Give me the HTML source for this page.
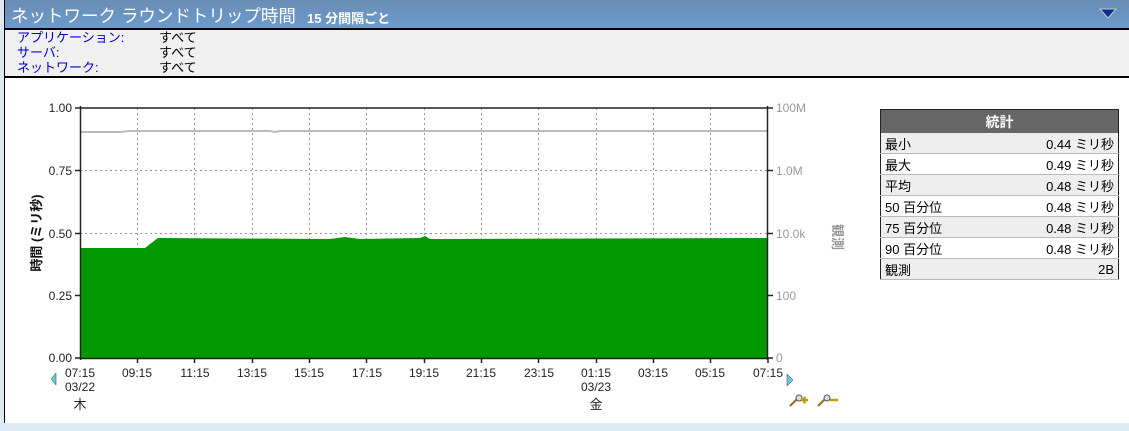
<!DOCTYPE html>
<html><head><meta charset="utf-8"><style>
body{margin:0;width:1129px;height:431px;overflow:hidden;background:#dde9f3;font-family:"Liberation Sans","Noto Sans CJK JP",sans-serif;position:relative}
#box{position:absolute;left:4px;top:0;width:1125px;height:423px;background:#fff;border-left:1px solid #000}
#hdr{position:absolute;left:0;top:0;width:1125px;height:28px;background:linear-gradient(#6a8db6,#6b9bcb);border-bottom:2px solid #000;color:#fff}
#hdr .t{position:absolute;left:6px;top:3px;font-size:17.5px}
#hdr .s{position:absolute;left:302px;top:8px;font-size:13px;font-weight:bold}
#filt{position:absolute;left:0;top:30px;width:1125px;height:46px;background:#f0f0f0;border-bottom:2px solid #000;font-size:13px;line-height:15px}
.k{position:absolute;left:12px;color:#0000cc}
.v{position:absolute;left:154px}
table{position:absolute;left:880px;top:109px;width:239px;border-collapse:collapse;border:1.5px solid #222;font-size:13px}
td{height:20px;padding:0 4px;border-bottom:1px solid #bbb}
tr:nth-child(even) td{background:#eee}
th{background:#666;color:#fff;height:21px;font-size:14px}
td.r{text-align:right}
svg text{font-family:"Liberation Sans","Noto Sans CJK JP",sans-serif}
</style></head><body>
<div id="box">
<div id="hdr"><span class="t">ネットワーク ラウンドトリップ時間</span><span class="s">15 分間隔ごと</span>
<svg style="position:absolute;left:1094px;top:8px" width="18" height="12"><polygon points="1,1 17,1 9,10" fill="#122a8f" stroke="#bcc" stroke-width="1"/></svg></div>
<div id="filt">
<span class="k" style="top:0">アプリケーション:</span><span class="v" style="top:0">すべて</span>
<span class="k" style="top:15px">サーバ:</span><span class="v" style="top:15px">すべて</span>
<span class="k" style="top:30px">ネットワーク:</span><span class="v" style="top:30px">すべて</span>
</div>
</div>
<svg style="position:absolute;left:0;top:0" width="870" height="420">
<g stroke="#999" stroke-dasharray="2,3" stroke-width="1">
<line x1="80" y1="170.5" x2="768" y2="170.5"/><line x1="80" y1="233.5" x2="768" y2="233.5"/><line x1="80" y1="295.5" x2="768" y2="295.5"/>
<line x1="137.5" y1="108" x2="137.5" y2="358"/><line x1="194.5" y1="108" x2="194.5" y2="358"/><line x1="252.5" y1="108" x2="252.5" y2="358"/><line x1="309.5" y1="108" x2="309.5" y2="358"/><line x1="366.5" y1="108" x2="366.5" y2="358"/><line x1="424.5" y1="108" x2="424.5" y2="358"/><line x1="481.5" y1="108" x2="481.5" y2="358"/><line x1="538.5" y1="108" x2="538.5" y2="358"/><line x1="596.5" y1="108" x2="596.5" y2="358"/><line x1="653.5" y1="108" x2="653.5" y2="358"/><line x1="710.5" y1="108" x2="710.5" y2="358"/>
</g>
<polygon points="80,248 145,248 150,244 158,238 330,239 345,237 360,239 420,238 425,236 430,239 768,238 768,358 80,358" fill="#009900"/>
<polyline points="80,132 120,132 130,131 270,131 275,132 280,131 768,131" fill="none" stroke="#bbb" stroke-width="2"/>
<g stroke="#222" stroke-width="1.5" fill="none"><path d="M80,108H768M80.5,106V360M767.5,106V360M80,358.5H768"/>
<path d="M75,108h5M75,170.5h5M75,233.5h5M75,295.5h5M75,358h5M768,108h5M768,170.5h5M768,233.5h5M768,295.5h5M768,358h5"/>
<path d="M137.5,358v5M194.5,358v5M252.5,358v5M309.5,358v5M366.5,358v5M424.5,358v5M481.5,358v5M538.5,358v5M596.5,358v5M653.5,358v5M710.5,358v5M768,358v5"/></g>
<g font-size="12" fill="#222" text-anchor="end"><text x="72" y="112">1.00</text><text x="72" y="175">0.75</text><text x="72" y="238">0.50</text><text x="72" y="300">0.25</text><text x="72" y="362">0.00</text></g>
<g font-size="12" fill="#999"><text x="776" y="112">100M</text><text x="776" y="175">1.0M</text><text x="776" y="238">10.0k</text><text x="776" y="300">100</text><text x="776" y="362">0</text></g>
<g font-size="12" fill="#222" text-anchor="middle"><text x="80" y="377">07:15</text><text x="137" y="377">09:15</text><text x="195" y="377">11:15</text><text x="252" y="377">13:15</text><text x="309" y="377">15:15</text><text x="367" y="377">17:15</text><text x="424" y="377">19:15</text><text x="481" y="377">21:15</text><text x="539" y="377">23:15</text><text x="596" y="377">01:15</text><text x="653" y="377">03:15</text><text x="710" y="377">05:15</text><text x="768" y="377">07:15</text>
<text x="80" y="391">03/22</text><text x="596" y="391">03/23</text><text x="80" y="409" font-size="13">木</text><text x="596" y="409" font-size="13">金</text></g>
<text transform="translate(41,233) rotate(-90)" font-size="13" font-weight="bold" text-anchor="middle" fill="#111">時間 (ミリ秒)</text>
<text transform="translate(833,237) rotate(90)" font-size="13" font-weight="bold" text-anchor="middle" fill="#999">観測</text>
<polygon points="56,373 51,379 56,385" fill="#6cd" stroke="#333" stroke-width=".5"/>
<polygon points="787,374 793,380 787,386" fill="#6cd" stroke="#333" stroke-width=".5"/>
<g stroke="#963" stroke-width="2"><line x1="790" y1="406" x2="797" y2="399"/><line x1="818" y1="406" x2="825" y2="399"/></g>
<circle cx="799" cy="398" r="3" fill="#ddd" stroke="#555"/><circle cx="827" cy="398" r="3" fill="#ddd" stroke="#555"/>
<path d="M801,400h7M804.5,396.5v7M830,400h8" stroke="#b90" stroke-width="2.5"/>
</svg>
<table>
<tr><th colspan="2">統計</th></tr>
<tr><td>最小</td><td class="r">0.44 ミリ秒</td></tr>
<tr><td>最大</td><td class="r">0.49 ミリ秒</td></tr>
<tr><td>平均</td><td class="r">0.48 ミリ秒</td></tr>
<tr><td>50 百分位</td><td class="r">0.48 ミリ秒</td></tr>
<tr><td>75 百分位</td><td class="r">0.48 ミリ秒</td></tr>
<tr><td>90 百分位</td><td class="r">0.48 ミリ秒</td></tr>
<tr><td>観測</td><td class="r">2B</td></tr>
</table>
</body></html>
